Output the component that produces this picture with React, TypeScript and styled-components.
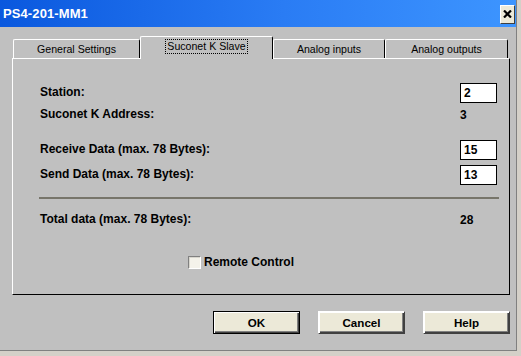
import React from 'react'
import styled, { createGlobalStyle } from 'styled-components'

const GlobalStyle = createGlobalStyle`
  html, body {
    margin: 0;
    padding: 0;
    background: #d4d0c8;
  }
  body {
    font-family: "Liberation Sans", Arial, sans-serif;
  }
`

const Window = styled.div`
  width: 517px;
  height: 351px;
  box-sizing: border-box;
  background: #c0c0c0;
  border-right: 1px solid #808080;
  border-bottom: 1px solid #808080;
  display: flex;
  flex-direction: column;
`

const TitleBar = styled.div`
  height: 27px;
  flex: none;
  display: flex;
  align-items: center;
  justify-content: space-between;
  padding: 0 1px 0 3px;
  background: linear-gradient(to right, #0a58de 0%, #2a7cf4 55%, #3d95ff 100%);
`

const Title = styled.span`
  color: #ffffff;
  font-weight: bold;
  font-size: 13px;
  letter-spacing: 0.1px;
`

const CloseButton = styled.div`
  width: 15px;
  height: 19px;
  box-sizing: border-box;
  margin-top: 1px;
  background: #ece9d8;
  border-top: 1px solid #ffffff;
  border-left: 1px solid #ffffff;
  border-right: 1px solid #404040;
  border-bottom: 1px solid #404040;
  display: flex;
  align-items: center;
  justify-content: center;
`

const Body = styled.div`
  flex: 1;
  padding: 9px 0 0 12px;
  display: flex;
  flex-direction: column;
`

const TabStrip = styled.div`
  display: flex;
  align-items: flex-end;
  height: 22px;
  padding-left: 1px;
  position: relative;
  z-index: 1;
`

const Tab = styled.div<{ $w: number; $active?: boolean }>`
  width: ${p => p.$w}px;
  height: ${p => (p.$active ? 23 : 19)}px;
  margin-bottom: ${p => (p.$active ? -1 : 0)}px;
  box-sizing: border-box;
  background: #c0c0c0;
  border-top: 1px solid #ffffff;
  border-left: 1px solid #ffffff;
  border-right: 1px solid #000000;
  border-radius: 2px 2px 0 0;
  display: flex;
  align-items: center;
  justify-content: center;
  padding-bottom: ${p => (p.$active ? 3 : 0)}px;
  font-size: 10.6px;
  color: #000000;
`

const FocusText = styled.span`
  border: 1px dotted #000000;
  padding: 1px 1px;
  line-height: 11px;
`

const Panel = styled.div`
  width: 498px;
  height: 237px;
  box-sizing: border-box;
  border-top: 1px solid #ffffff;
  border-left: 1px solid #ffffff;
  border-right: 1px solid #000000;
  border-bottom: 1px solid #000000;
  padding: 24px 12px 0 27px;
  display: flex;
  flex-direction: column;
`

const Row = styled.div<{ $top?: number }>`
  display: flex;
  align-items: center;
  justify-content: space-between;
  height: 20px;
  margin-top: ${p => p.$top ?? 0}px;
`

const Label = styled.span`
  font-size: 12px;
  font-weight: bold;
  color: #000000;
  margin-top: -2px;
`

const Value = styled.span`
  width: 37px;
  font-size: 12px;
  font-weight: bold;
  color: #000000;
`

const Field = styled.div`
  width: 37px;
  height: 20px;
  box-sizing: border-box;
  border: 1px solid #000000;
  background: #ffffff;
  padding-left: 3px;
  font-size: 12px;
  font-weight: bold;
  line-height: 18px;
`

const Separator = styled.div`
  height: 2px;
  margin: 12px -2px 0 -1px;
  background: #77756a;
`

const CheckRow = styled.label`
  display: flex;
  align-items: center;
  gap: 3px;
  margin-top: 22px;
  padding-left: 148px;
  height: 20px;
  font-size: 12px;
  font-weight: bold;
`

const CheckBox = styled.span`
  width: 13px;
  height: 13px;
  box-sizing: border-box;
  border-top: 1px solid #808080;
  border-left: 1px solid #808080;
  border-right: 1px solid #ffffff;
  border-bottom: 1px solid #ffffff;
  background: #f4f2ea;
  box-shadow: inset 1px 1px 0 #d8d6ce;
`

const ButtonRow = styled.div`
  display: flex;
  justify-content: flex-end;
  gap: 18px;
  width: 498px;
  padding-top: 16px;
`

const Button = styled.div<{ $default?: boolean }>`
  width: 87px;
  height: 23px;
  box-sizing: border-box;
  background: #ece9d8;
  border: 1px solid ${p => (p.$default ? '#000000' : 'transparent')};
  box-shadow: ${p =>
    p.$default
      ? 'inset 1px 1px 0 #ffffff, inset -1px -1px 0 #404040, inset -2px -2px 0 #808080'
      : 'inset 1px 1px 0 #ffffff, inset -1px -1px 0 #404040, inset -2px -2px 0 #808080'};
  border-color: ${p => (p.$default ? '#000000' : '#ffffff #404040 #404040 #ffffff')};
  display: flex;
  align-items: center;
  justify-content: center;
  font-size: 11.6px;
  font-weight: bold;
  color: #000000;
`

const App: React.FC = () => {
  return (
    <>
      <GlobalStyle />
      <Window>
        <TitleBar>
          <Title>PS4-201-MM1</Title>
          <CloseButton>
            <svg width="9" height="8" viewBox="0 0 9 8">
              <path d="M1 0.5 L8 7.5 M8 0.5 L1 7.5" stroke="#000" strokeWidth="2.2" />
            </svg>
          </CloseButton>
        </TitleBar>
        <Body>
          <TabStrip>
            <Tab $w={127}>General Settings</Tab>
            <Tab $w={133} $active>
              <FocusText>Suconet K Slave</FocusText>
            </Tab>
            <Tab $w={112}>Analog inputs</Tab>
            <Tab $w={123}>Analog outputs</Tab>
          </TabStrip>
          <Panel>
            <Row>
              <Label>Station:</Label>
              <Field>2</Field>
            </Row>
            <Row $top={2}>
              <Label>Suconet K Address:</Label>
              <Value>3</Value>
            </Row>
            <Row $top={15}>
              <Label>Receive Data (max. 78 Bytes):</Label>
              <Field>15</Field>
            </Row>
            <Row $top={5}>
              <Label>Send Data (max. 78 Bytes):</Label>
              <Field>13</Field>
            </Row>
            <Separator />
            <Row $top={11}>
              <Label>Total data (max. 78 Bytes):</Label>
              <Value>28</Value>
            </Row>
            <CheckRow>
              <CheckBox />
              Remote Control
            </CheckRow>
          </Panel>
          <ButtonRow>
            <Button $default>OK</Button>
            <Button>Cancel</Button>
            <Button>Help</Button>
          </ButtonRow>
        </Body>
      </Window>
    </>
  )
}

export default App
